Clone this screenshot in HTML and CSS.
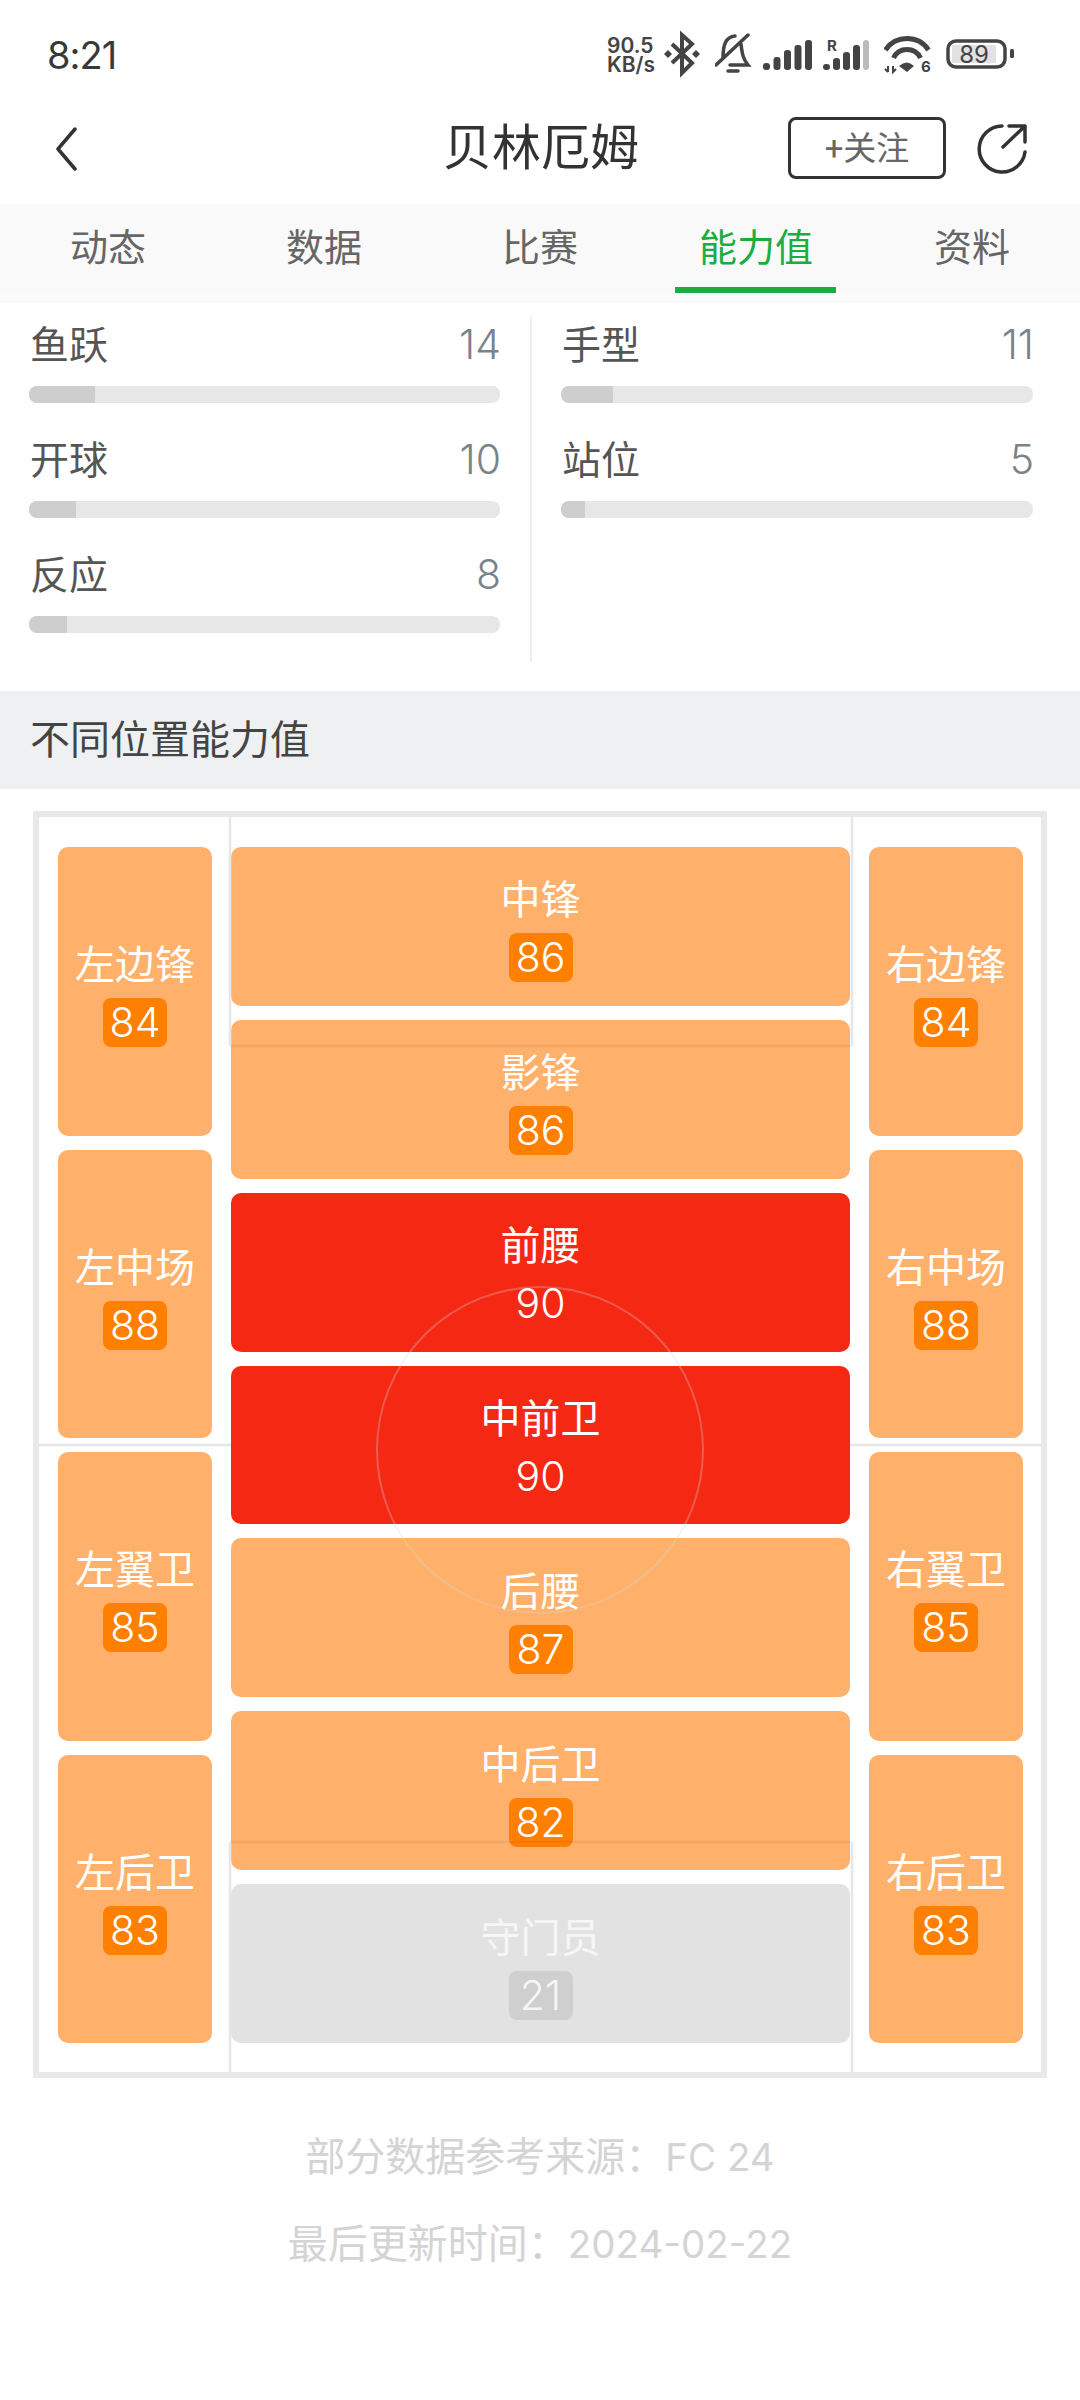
FILE: index.html
```html
<!DOCTYPE html>
<html lang="zh-CN">
<head>
    <meta charset="UTF-8">
    <meta name="viewport" content="width=device-width, initial-scale=1.0">
    <title>贝林厄姆</title>
    <link rel="stylesheet" href="styles.css">
</head>
<body>

    <!-- Status bar -->
    <div class="status-bar">
        <span class="status-time">8:21</span>
        <div class="status-icons">
            <div class="net-speed">90.5<br>KB/s</div>
            <svg width="41" height="50" viewBox="0 0 41 50"><path d="M8 14 L28 33 L18 43 V5 L28 14 L8 33" class="icon-line"/><path d="M4 20 L8 24 L4 28 L0 24 Z M32 20 L36 24 L32 28 L28 24 Z" class="icon-fill"/></svg>
            <svg width="38" height="50" viewBox="0 0 38 50"><path d="M8 28 C8 14 11 7 20 6 M26 14 C27 23 28 29 33 35 H15 M13 41 H23 M1 35 L33 5" class="icon-line thin"/></svg>
            <svg width="50" height="50" viewBox="0 0 50 50"><rect x="0" y="33" width="7" height="7" rx="3" class="icon-fill"/><rect x="10.5" y="27" width="7" height="13" rx="3" class="icon-fill"/><rect x="21" y="20" width="7" height="20" rx="3" class="icon-fill"/><rect x="31.5" y="15" width="7" height="25" rx="3" class="icon-fill"/><rect x="42" y="10" width="7" height="30" rx="3" class="icon-fill"/></svg>
            <svg width="51" height="50" viewBox="0 0 51 50"><text x="4" y="21" class="icon-text small">R</text><rect x="0" y="34" width="7" height="6" rx="3" class="icon-fill"/><rect x="10" y="28" width="7" height="12" rx="3" class="icon-fill"/><rect x="20" y="22" width="7" height="18" rx="3" class="icon-fill"/><rect x="30" y="15" width="7" height="25" rx="3" class="icon-fill"/><rect x="40" y="10" width="6" height="30" rx="3" class="icon-dim"/></svg>
            <svg width="52" height="50" viewBox="0 0 52 50"><path d="M1.5 20 A26 26 0 0 1 44.5 20 M9.5 28 A15 15 0 0 1 36.5 28" class="icon-line wide"/><path d="M15 36 Q23 29 30 36 L23 42 Z" class="icon-fill"/><path d="M4 36 V42 M1 39 L4 42 M9 36 V42 L12 39" class="icon-line hair"/><text x="37" y="42" class="icon-text six">6</text></svg>
            <svg width="68" height="50" viewBox="0 0 68 50"><rect x="2" y="11" width="57" height="26" rx="8" class="batt-shell"/><rect x="6" y="15" width="44" height="18" class="batt-fill"/><text x="28" y="33" class="batt-text">89</text><rect x="64" y="19" width="4" height="9" rx="1.5" class="icon-fill"/></svg>
        </div>
    </div>

    <!-- Title bar -->
    <div class="top-bar">
        <div class="top-left">
            <svg width="22" height="44" viewBox="0 0 22 44"><path d="M20 2 L3 22 L20 42" class="nav-line"/></svg>
        </div>
        <div class="top-title">贝林厄姆</div>
        <div class="top-right">
            <button class="follow-btn">+关注</button>
            <svg width="50" height="50" viewBox="0 0 50 50"><path d="M25 2 A23 23 0 1 0 48 28 M26 23 L48 2 M32 2 H48 V18" class="nav-line"/></svg>
        </div>
    </div>

    <!-- Tabs -->
    <div class="tabs">
        <div class="tab">动态</div>
        <div class="tab">数据</div>
        <div class="tab">比赛</div>
        <div class="tab active">能力值</div>
        <div class="tab">资料</div>
    </div>

    <!-- Goalkeeper attributes -->
    <div class="attrs">
        <div class="attr-col first">
            <div class="attr">
                <div class="attr-head"><span class="attr-name">鱼跃</span><span class="attr-num">14</span></div>
                <div class="track"><div class="fill" style="width: 14%"></div></div>
            </div>
            <div class="attr">
                <div class="attr-head"><span class="attr-name">开球</span><span class="attr-num">10</span></div>
                <div class="track"><div class="fill" style="width: 10%"></div></div>
            </div>
            <div class="attr">
                <div class="attr-head"><span class="attr-name">反应</span><span class="attr-num">8</span></div>
                <div class="track"><div class="fill" style="width: 8%"></div></div>
            </div>
        </div>
        <div class="attr-col">
            <div class="attr">
                <div class="attr-head"><span class="attr-name">手型</span><span class="attr-num">11</span></div>
                <div class="track"><div class="fill" style="width: 11%"></div></div>
            </div>
            <div class="attr">
                <div class="attr-head"><span class="attr-name">站位</span><span class="attr-num">5</span></div>
                <div class="track"><div class="fill" style="width: 5%"></div></div>
            </div>
        </div>
    </div>

    <div class="section-title">不同位置能力值</div>

    <!-- Position ratings on the pitch -->
    <div class="pitch">
        <div class="pitch-col side">
            <div class="pos"><span class="pos-name">左边锋</span><span class="pos-val">84</span></div>
            <div class="pos"><span class="pos-name">左中场</span><span class="pos-val">88</span></div>
            <div class="pos"><span class="pos-name">左翼卫</span><span class="pos-val">85</span></div>
            <div class="pos"><span class="pos-name">左后卫</span><span class="pos-val">83</span></div>
        </div>
        <div class="pitch-col middle">
            <div class="pos"><span class="pos-name">中锋</span><span class="pos-val">86</span></div>
            <div class="pos"><span class="pos-name">影锋</span><span class="pos-val">86</span></div>
            <div class="pos best"><span class="pos-name">前腰</span><span class="pos-val">90</span></div>
            <div class="pos best"><span class="pos-name">中前卫</span><span class="pos-val">90</span></div>
            <div class="pos"><span class="pos-name">后腰</span><span class="pos-val">87</span></div>
            <div class="pos"><span class="pos-name">中后卫</span><span class="pos-val">82</span></div>
            <div class="pos keeper"><span class="pos-name">守门员</span><span class="pos-val">21</span></div>
        </div>
        <div class="pitch-col side">
            <div class="pos"><span class="pos-name">右边锋</span><span class="pos-val">84</span></div>
            <div class="pos"><span class="pos-name">右中场</span><span class="pos-val">88</span></div>
            <div class="pos"><span class="pos-name">右翼卫</span><span class="pos-val">85</span></div>
            <div class="pos"><span class="pos-name">右后卫</span><span class="pos-val">83</span></div>
        </div>
        <svg class="pitch-lines" viewBox="0 0 1002 1255">
            <path d="M191 229 H813 M191 1025 H813" class="line"/>
            <path d="M191 0 V229 M813 0 V229 M191 1025 V1255 M813 1025 V1255" class="edge"/>
            <path d="M0 628 H192 M811 628 H1002" class="edge"/>
            <circle cx="501" cy="633" r="163" class="ring"/>
        </svg>
    </div>

    <div class="footer">
        <p>部分数据参考来源：<span class="latin">FC 24</span></p>
        <p>最后更新时间：<span class="latin">2024-02-22</span></p>
    </div>

</body>
</html>
```

FILE: styles.css
```css
* {
    box-sizing: border-box;
}

body {
    margin: 0;
    width: 1080px;
    height: 2400px;
    overflow: hidden;
    background-color: #fff;
    color: #444;
    font-family: Roboto, "Noto Sans CJK SC", sans-serif;
}

/* Status bar */
.status-bar {
    display: flex;
    align-items: center;
    justify-content: space-between;
    height: 100px;
    padding: 10px 66px 0 47px;
}

.status-time {
    font-family: Inter, sans-serif;
    font-size: 38px;
    color: #383838;
    letter-spacing: -1px;
}

.status-icons {
    display: flex;
    align-items: center;
    gap: 10px;
}

.net-speed {
    width: 47px;
    font-family: Inter, sans-serif;
    font-size: 21px;
    font-weight: 600;
    line-height: 19px;
    color: #444;
    white-space: nowrap;
}

.icon-line {
    fill: none;
    stroke: #444;
    stroke-width: 4;
}

.icon-line.thin {
    stroke-width: 3.5;
    stroke-linecap: round;
}

.icon-line.wide {
    stroke-width: 5;
}

.icon-line.hair {
    stroke-width: 2;
}

.icon-fill {
    fill: #444;
}

.icon-dim {
    fill: #bbb;
}

.icon-text {
    fill: #444;
    font-family: Inter, sans-serif;
    font-weight: 700;
}

.icon-text.small {
    font-size: 15px;
}

.icon-text.six {
    font-size: 15px;
}

.batt-shell {
    fill: none;
    stroke: #444;
    stroke-width: 3.5;
}

.batt-fill {
    fill: #e2e2e2;
}

.batt-text {
    fill: #444;
    font-family: Inter, sans-serif;
    font-size: 24px;
    text-anchor: middle;
}

/* Title bar */
.top-bar {
    display: grid;
    grid-template-columns: 1fr auto 1fr;
    align-items: center;
    height: 104px;
    padding: 0 53px 6px 55px;
}

.top-title {
    font-size: 49px;
    line-height: 60px;
    color: #333;
}

.top-left,
.top-right {
    display: flex;
    align-items: center;
}

.top-right {
    justify-content: flex-end;
    gap: 31px;
}

.follow-btn {
    width: 158px;
    height: 62px;
    margin-bottom: 3px;
    padding: 0 0 4px;
    border: 3px solid #333;
    border-radius: 8px;
    background-color: #fff;
    color: #666;
    font-family: Roboto, "Noto Sans CJK SC", sans-serif;
    font-size: 33px;
}

.nav-line {
    fill: none;
    stroke: #333;
    stroke-width: 3.5;
    stroke-linecap: round;
    stroke-linejoin: round;
}

/* Tabs */
.tabs {
    display: flex;
    height: 99px;
    border-bottom: 10px solid #fbfbfb;
    background-color: #f9f9f9;
}

.tab {
    position: relative;
    display: flex;
    flex: 1;
    align-items: center;
    justify-content: center;
    padding-bottom: 8px;
    font-size: 38px;
    color: #666;
}

.tab.active {
    color: #1aad3f;
}

.tab.active::after {
    content: "";
    position: absolute;
    left: 27px;
    right: 28px;
    bottom: 0;
    height: 6px;
    background-color: #1aad3f;
}

/* Attributes */
.attrs {
    display: flex;
    align-items: flex-start;
    height: 388px;
    padding-top: 13px;
}

.attr-col {
    width: 501px;
    padding-left: 29px;
    padding-right: 0;
}

.attr-col.first {
    width: 532px;
    height: 346px;
    padding-left: 29px;
    padding-right: 30px;
    border-right: 2px solid #eee;
}

.attr {
    height: 115px;
}

.attr-head {
    display: flex;
    align-items: center;
    justify-content: space-between;
    height: 56px;
    margin-bottom: 14px;
}

.attr-name {
    margin-bottom: 5px;
    margin-left: 1px;
    font-size: 39px;
    color: #555;
}

.attr-num {
    margin-right: -1px;
    font-family: Inter, sans-serif;
    font-size: 41px;
    font-weight: 300;
    color: #7b838a;
}

.track {
    height: 17px;
    overflow: hidden;
    border-radius: 8px;
    background-color: #e7e7e7;
}

.fill {
    height: 100%;
    background-color: #cecece;
}

.section-title {
    display: flex;
    align-items: center;
    height: 98px;
    padding: 0 0 6px 30px;
    background-color: #eff0f2;
    font-size: 40px;
    color: #444;
}

/* Pitch */
.pitch {
    position: relative;
    display: flex;
    gap: 19px;
    width: 1014px;
    height: 1267px;
    margin: 22px 0 0 33px;
    padding: 30px 18px 29px 19px;
    border: 6px solid #e9e9e9;
}

.pitch-col {
    display: flex;
    flex-direction: column;
    gap: 14px;
}

.pitch-col.side {
    width: 154px;
}

.pitch-col.middle {
    flex: 1;
}

.pos {
    display: flex;
    flex: 1;
    flex-direction: column;
    align-items: center;
    justify-content: center;
    padding-top: 5px;
    border-radius: 10px;
    background-color: #ffb16b;
    color: #fff;
}

.pos-name {
    margin-bottom: 6px;
    font-size: 40px;
    line-height: 52px;
}

.pos-val {
    width: 64px;
    height: 49px;
    border-radius: 8px;
    background-color: #ff7f00;
    font-family: Inter, sans-serif;
    font-size: 41px;
    font-weight: 300;
    line-height: 49px;
    text-align: center;
}

.pos.best {
    background-color: #f52814;
}

.pos.best .pos-val {
    background-color: transparent;
}

.pos.keeper {
    background-color: #e2e2e2;
    color: #f6f6f6;
}

.pos.keeper .pos-val {
    background-color: #cfcfcf;
}

/* Pitch markings sit on top of the cards */
.pitch-lines {
    position: absolute;
    top: 0;
    left: 0;
    width: 1002px;
    height: 1255px;
    pointer-events: none;
}

.line {
    fill: none;
    stroke: rgba(0, 0, 0, 0.05);
    stroke-width: 2.5;
}

.edge {
    fill: none;
    stroke: #e6e6e6;
    stroke-width: 2.5;
}

.ring {
    fill: none;
    stroke: rgba(215, 215, 215, 0.3);
    stroke-width: 2;
}

/* Footer */
.footer {
    padding-top: 36px;
    color: #d4d4d4;
    font-size: 40px;
    text-align: center;
}

.footer p {
    margin: 0;
    line-height: 86px;
}

.latin {
    font-family: Inter, sans-serif;
    font-size: 38.5px;
}
```
